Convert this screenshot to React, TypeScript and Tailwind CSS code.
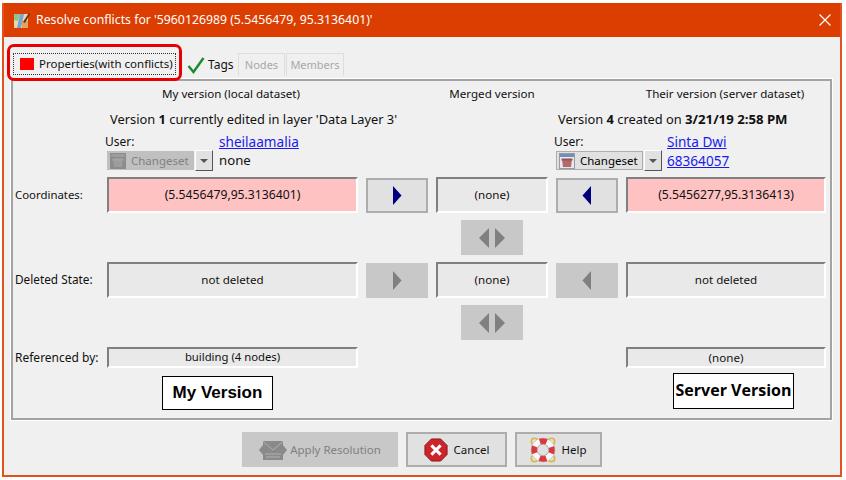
const cols = "grid grid-cols-[84px_251px_62px_112px_62px_200px] gap-x-2 pl-[2px]";

const Field = ({ text, conflict, size }: { text: string; conflict?: boolean; size?: string }) => (
  <div
    className={`flex h-full items-center justify-center border-2 border-t-[#808080] border-l-[#808080] border-r-white border-b-white ${
      size ?? "text-[11.6px]"
    } ${conflict ? "bg-[#ffc2c2]" : "bg-[#e9e9e9]"}`}
  >
    {text}
  </div>
);

const Arrow = ({ dir, on }: { dir: "left" | "right"; on?: boolean }) => (
  <button
    className={`flex h-[35px] w-full items-center justify-center border-2 ${
      on ? "border-[#adadad] bg-[#e1e1e1]" : "border-[#c8c8c8] bg-[#c8c8c8]"
    }`}
  >
    <svg width="10" height="19" viewBox="0 0 10 19">
      <path
        d={dir === "right" ? "M1 0 L9.5 9.5 L1 19 Z" : "M9 0 L0.5 9.5 L9 19 Z"}
        fill={on ? "#00007f" : "#808080"}
      />
    </svg>
  </button>
);

const MergeBtn = () => (
  <button className="col-start-4 mx-auto flex h-[35px] w-[62px] items-center justify-center gap-[6px] bg-[#c8c8c8]">
    <svg width="10" height="20" viewBox="0 0 10 20">
      <path d="M10 0 L0 10 L10 20 Z" fill="#808080" />
    </svg>
    <svg width="10" height="20" viewBox="0 0 10 20">
      <path d="M0 0 L10 10 L0 20 Z" fill="#808080" />
    </svg>
  </button>
);

const ChangesetIcon = ({ on }: { on?: boolean }) => (
  <svg width="16" height="16" viewBox="0 0 16 16">
    <rect x="0.5" y="0.5" width="15" height="15" fill={on ? "#e8e8f0" : "#8c8c8c"} stroke={on ? "#9a9a9a" : "#8c8c8c"} />
    <rect x="1" y="1" width="14" height="3" fill={on ? "#6d8fc0" : "#9c9c9c"} />
    <path d="M3 6 H13 L12 14 H4 Z" fill={on ? "#b56a6a" : "#9c9c9c"} />
    <rect x="2.5" y="5.5" width="11" height="2" fill={on ? "#995050" : "#a4a4a4"} />
  </svg>
);

const Changeset = ({ on }: { on?: boolean }) => (
  <div className="flex items-center gap-px">
    <button
      className={`flex h-[19px] w-[87px] items-center gap-[5px] border pl-[2px] text-[11.5px] ${
        on ? "border-[#adadad] bg-[#e1e1e1] text-black" : "border-[#c0c0c0] bg-[#c0c0c0] text-[#808080]"
      }`}
    >
      <ChangesetIcon on={on} />
      Changeset
    </button>
    <button className="flex h-[21px] w-[18px] items-center justify-center border border-t-white border-l-white border-r-[#555555] border-b-[#555555] bg-[#e1e1e1]">
      <svg width="8" height="4" viewBox="0 0 8 4">
        <path d="M0 0 H8 L4 4 Z" fill="#555555" />
      </svg>
    </button>
  </div>
);

const Link = ({ children }: { children: string }) => (
  <a className="text-[13.6px] leading-[19px] text-[#1a1aee] underline">{children}</a>
);

export default function App() {
  return (
    <div
      className="relative h-[480px] w-[846px] overflow-hidden bg-white pl-[2px] pt-[3px] text-[#111111]"
      style={{ fontFamily: '"Noto Sans", "Liberation Sans", sans-serif' }}
    >
      <div className="flex h-[474px] w-[840px] flex-col border-2 border-t-0 border-[#e2521f] bg-[#f0f0f0]">
        <div className="flex h-[34px] shrink-0 items-center bg-[#db3e00] pl-[9px] pr-[9px] text-[12.27px] text-white">
          <svg width="17" height="17" viewBox="0 0 17 17">
            <rect x="1" y="2" width="14" height="14" fill="#e9d9a8" />
            <path d="M1 2 L7 2 L5 9 L1 8 Z" fill="#8fc48a" />
            <path d="M7 2 L11 2 L8 16 L4 16 Z" fill="#7aa3d8" />
            <path d="M9 9 L15 9 L15 16 L9 16 Z" fill="#e8a35a" />
            <path d="M10 10 L16 1 L17 2 L12 11 Z" fill="#5b3417" />
          </svg>
          <span className="ml-[6px] whitespace-nowrap">Resolve conflicts for '5960126989 (5.5456479, 95.3136401)'</span>
          <svg className="ml-auto" width="12" height="12" viewBox="0 0 12 12" stroke="white" strokeWidth="1.2">
            <path d="M0.5 0.5 L11.5 11.5 M11.5 0.5 L0.5 11.5" />
          </svg>
        </div>

        <div className="mt-[15px] flex h-[27px] shrink-0 pl-[6px] text-[12px]">
          <div className="flex w-[172px] items-start">
            <div className="ml-[3px] mt-[1px] flex h-[22px] w-[163px] items-center border border-dotted border-[#333333] pl-[6px]">
              <span className="h-[12px] w-[14px] shrink-0 bg-[#ff0000]" />
              <span className="ml-[5px] whitespace-nowrap text-[11.5px]">Properties(with conflicts)</span>
            </div>
          </div>
          <div className="flex h-[25px] w-[56px] items-center pl-[5px]">
            <svg width="18" height="18" viewBox="0 0 18 18">
              <path d="M1.5 10 L6.5 16 L16.5 2" fill="none" stroke="#1c8a2c" strokeWidth="2.4" />
            </svg>
            <span className="ml-[3px]">Tags</span>
          </div>
          <div className="mt-px flex h-[23px] w-[47px] items-center justify-center border border-b-0 border-[#dddddd] text-[11px] text-[#a8a8a8]">
            Nodes
          </div>
          <div className="ml-[1px] mt-px flex h-[23px] w-[58px] items-center justify-center border border-b-0 border-[#dddddd] text-[11px] text-[#a8a8a8]">
            Members
          </div>
        </div>

        <div className="ml-[7px] h-[341px] w-[821px] shrink-0 border-2 border-[#a3a3a3] shadow-[0_0_0_1px_#ffffff]">
          <div className={`${cols} mt-[4px] h-[18px] items-center text-center text-[11.6px]`}>
            <div className="col-start-2 pr-[3px]">My version (local dataset)</div>
            <div className="col-start-4">Merged version</div>
            <div className="col-start-6 pr-[2px]">Their version (server dataset)</div>
          </div>

          <div className={`${cols} mt-[7px] h-[18px] items-center text-[12.85px] whitespace-nowrap`}>
            <div className="col-start-2 pl-[3px]">
              Version <b>1</b> currently edited in layer 'Data Layer 3'
            </div>
            <div className="col-start-5 pl-[2px]">
              Version <b>4</b> created on <b className="text-[13.2px]">3/21/19 2:58 PM</b>
            </div>
          </div>

          <div className={`${cols} mt-[4px] h-[39px]`}>
            <div className="col-start-2 flex -ml-[2px]">
              <div className="w-[114px] text-[12px]">
                <div className="h-[18px] leading-[19px]">User:</div>
                <div className="ml-[2px]">
                  <Changeset />
                </div>
              </div>
              <div className="flex flex-col">
                <Link>sheilaamalia</Link>
                <span className="text-[13.2px] leading-[19px]">none</span>
              </div>
            </div>
            <div className="col-start-5 col-span-2 flex -ml-[2px]">
              <div className="w-[113px] text-[12px]">
                <div className="h-[18px] leading-[19px]">User:</div>
                <div className="ml-[2px]">
                  <Changeset on />
                </div>
              </div>
              <div className="flex flex-col">
                <Link>Sinta Dwi</Link>
                <Link>68364057</Link>
              </div>
            </div>
          </div>

          <div className={`${cols} mt-[6px] h-[36px] items-center text-[11.4px]`}>
            <div>Coordinates:</div>
            <Field text="(5.5456479,95.3136401)" conflict size="text-[12.2px]" />
            <Arrow dir="right" on />
            <Field text="(none)" />
            <Arrow dir="left" on />
            <Field text="(5.5456277,95.3136413)" conflict size="text-[12.2px]" />
          </div>

          <div className={`${cols} mt-[7px] h-[35px]`}>
            <MergeBtn />
          </div>

          <div className={`${cols} mt-[7px] h-[36px] items-center text-[11.8px]`}>
            <div className="whitespace-nowrap">Deleted State:</div>
            <Field text="not deleted" />
            <Arrow dir="right" />
            <Field text="(none)" />
            <Arrow dir="left" />
            <Field text="not deleted" />
          </div>

          <div className={`${cols} mt-[7px] h-[35px]`}>
            <MergeBtn />
          </div>

          <div className={`${cols} mt-[7px] h-[20px] items-center text-[12px]`}>
            <div className="whitespace-nowrap">Referenced by:</div>
            <Field text="building (4 nodes)" size="text-[11.3px]" />
            <div className="col-start-6 h-full">
              <Field text="(none)" />
            </div>
          </div>
        </div>

        <div className="mt-[12px] flex justify-center gap-2 text-[11.5px]">
          <button className="flex h-[35px] w-[156px] items-center justify-center gap-[3px] bg-[#c8c8c8] text-[#808080]">
            <svg width="28" height="24" viewBox="0 0 28 24">
              <path d="M0 12 L4 7 L4 3 L24 3 L24 7 L28 12 L24 17 L24 22 L4 22 L4 17 Z" fill="#8a8a8a" />
              <path d="M4 3.5 L14 12 L24 3.5 M6 16 H22 M7 19 H21" fill="none" stroke="#b0b0b0" />
            </svg>
            Apply Resolution
          </button>
          <button className="flex h-[35px] w-[101px] items-center justify-center gap-[6px] border-2 border-[#adadad] bg-[#e1e1e1]">
            <svg width="24" height="24" viewBox="0 0 26 26">
              <path d="M8 1 H18 L25 8 V18 L18 25 H8 L1 18 V8 Z" fill="#c9252b" stroke="#8c1518" />
              <path d="M8 8 L18 18 M18 8 L8 18" stroke="white" strokeWidth="3.2" />
            </svg>
            Cancel
          </button>
          <button className="flex h-[35px] w-[87px] items-center justify-center gap-[5px] border-2 border-[#adadad] bg-[#e1e1e1]">
            <svg width="26" height="26" viewBox="0 0 26 26">
              <circle cx="4.5" cy="4.5" r="3.2" fill="none" stroke="#d9b93a" strokeWidth="1.6" />
              <circle cx="21.5" cy="4.5" r="3.2" fill="none" stroke="#d9b93a" strokeWidth="1.6" />
              <circle cx="4.5" cy="21.5" r="3.2" fill="none" stroke="#d9b93a" strokeWidth="1.6" />
              <circle cx="21.5" cy="21.5" r="3.2" fill="none" stroke="#d9b93a" strokeWidth="1.6" />
              <circle cx="13" cy="13" r="9" fill="none" stroke="#f7f7f7" strokeWidth="6" />
              <circle cx="13" cy="13" r="9" fill="none" stroke="#e0373c" strokeWidth="6" strokeDasharray="7 7.14" strokeDashoffset="3.5" />
              <circle cx="13" cy="13" r="5.8" fill="none" stroke="#9a9a9a" strokeWidth="0.8" />
              <circle cx="13" cy="13" r="12" fill="none" stroke="#b0b0b0" strokeWidth="0.6" />
            </svg>
            Help
          </button>
        </div>
      </div>

      <div className="absolute left-[7px] top-[44px] h-[37px] w-[175px] rounded-[7px] border-[3px] border-[#e60000]" />
      <div
        className="absolute left-[162px] top-[376px] flex h-[34px] w-[111px] items-center justify-center border border-black bg-white text-[17px] font-bold text-black"
        style={{ fontFamily: '"Liberation Sans", sans-serif' }}
      >
        My Version
      </div>
      <div
        className="absolute left-[673px] top-[373px] flex h-[36px] w-[121px] items-center justify-center whitespace-nowrap border border-black bg-white pb-[2px] text-[16px] font-bold text-black"
        style={{ fontFamily: '"Open Sans", sans-serif' }}
      >
        Server Version
      </div>
    </div>
  );
}
